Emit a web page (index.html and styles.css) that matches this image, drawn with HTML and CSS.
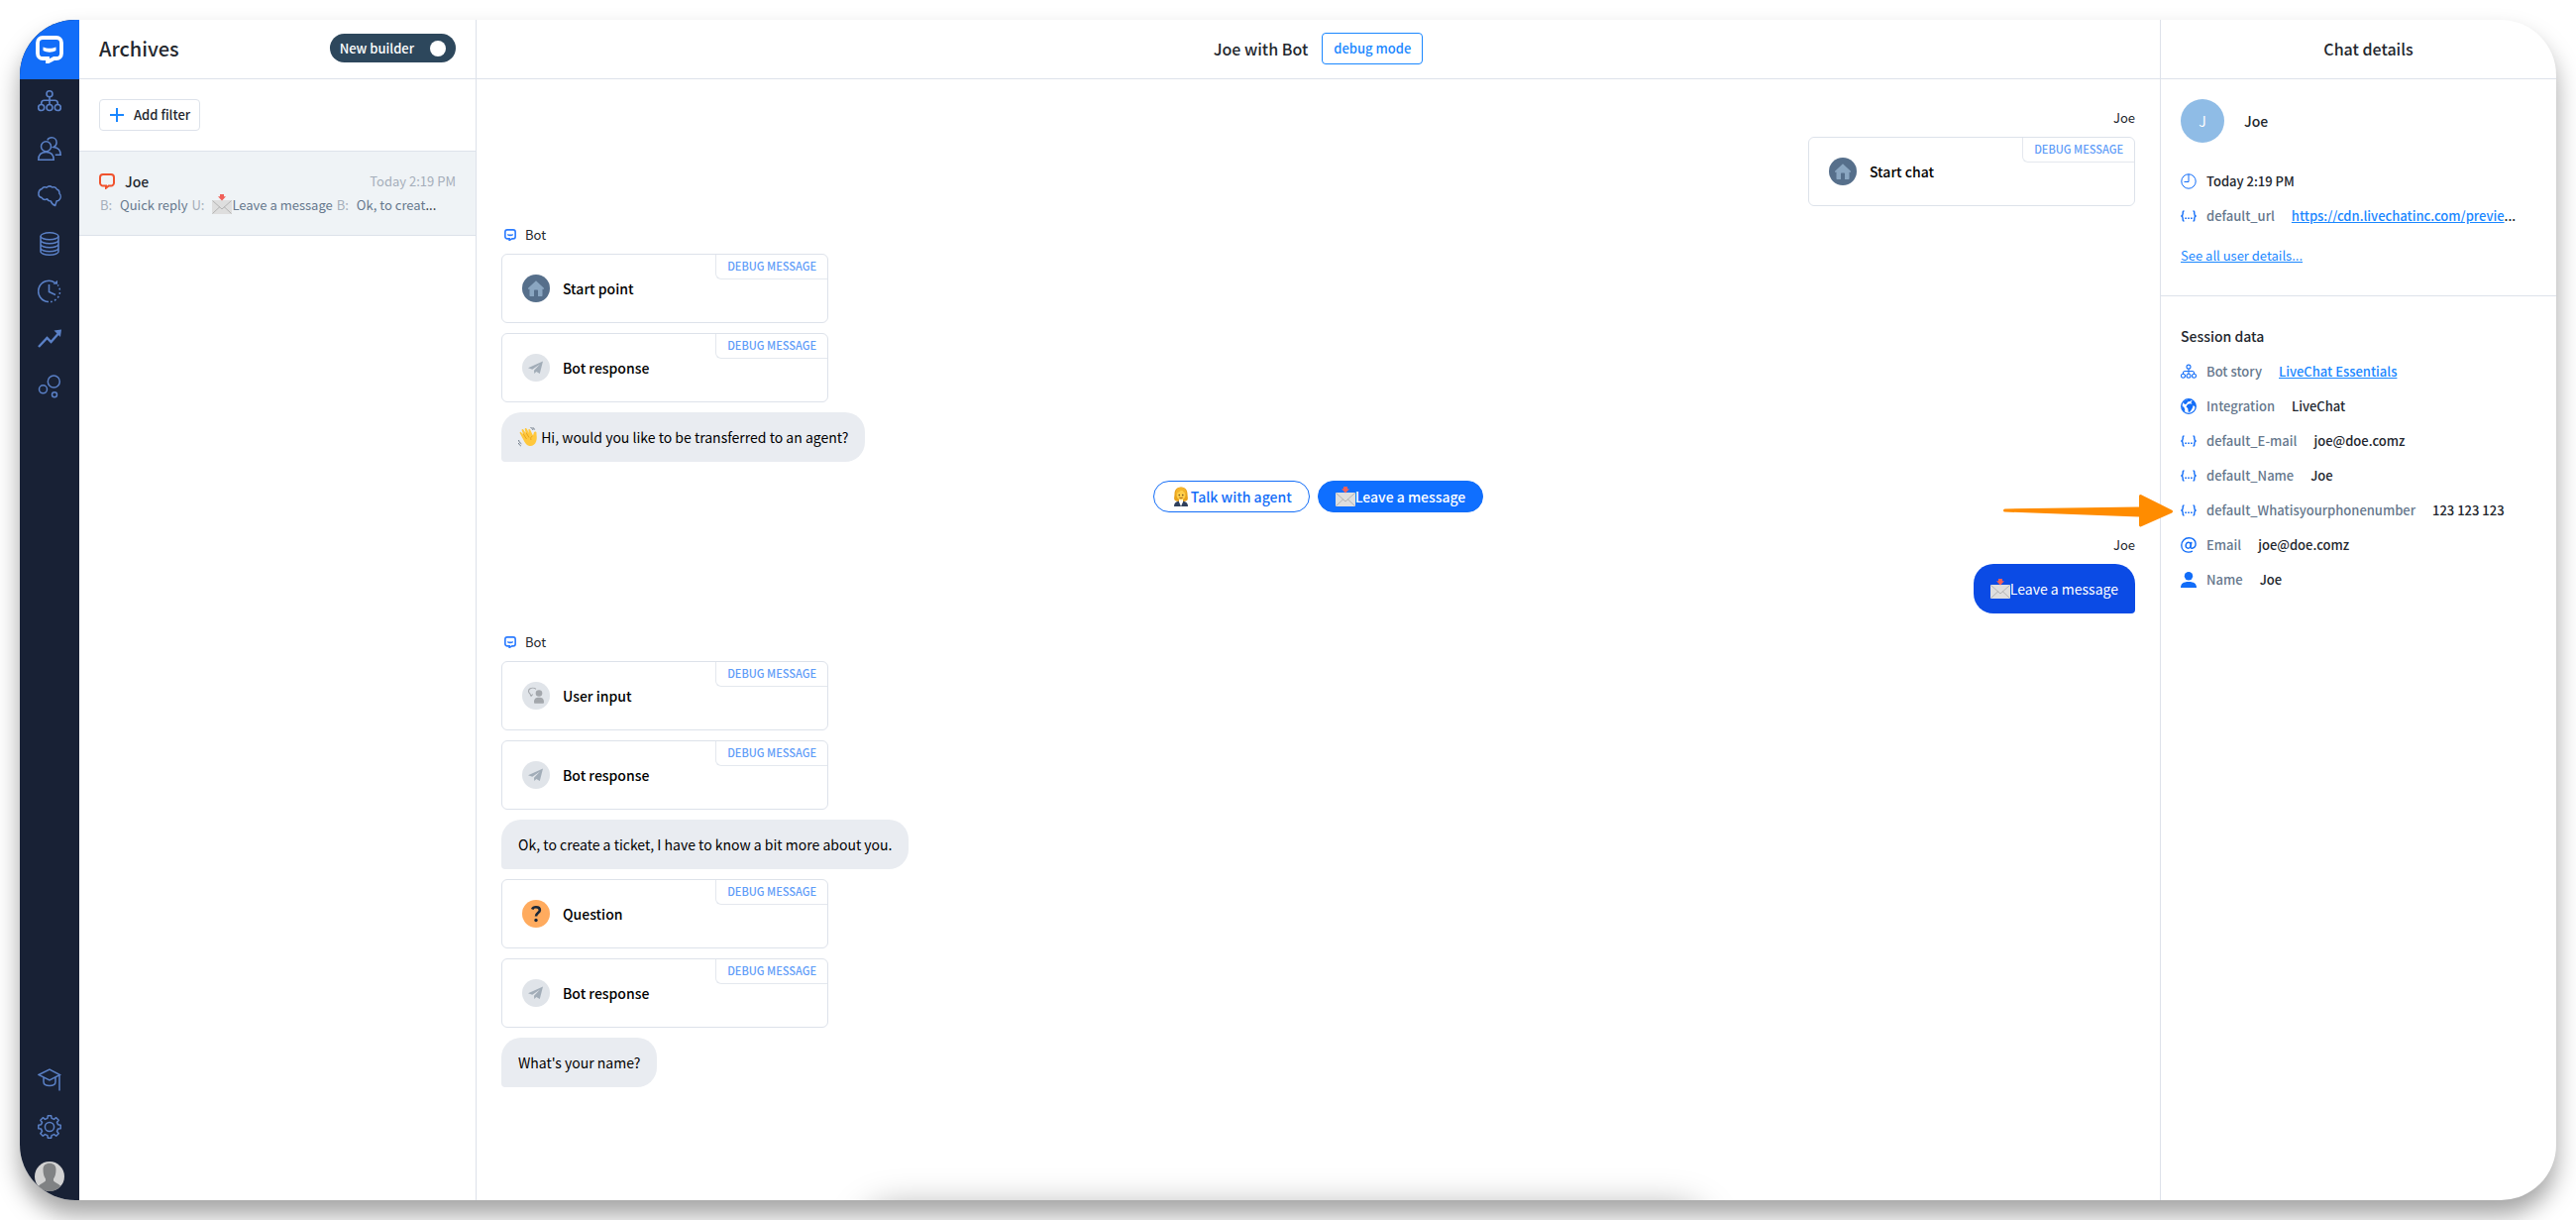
FILE: index.html
```html
<!DOCTYPE html>
<html lang="en">
<head>
    <meta charset="UTF-8">
    <meta name="viewport" content="width=device-width, initial-scale=1.0">
    <title>Archives</title>
    <link rel="stylesheet" href="styles.css">
</head>
<body>

    <!-- shared icons -->
    <svg class="sprite" aria-hidden="true">
        <symbol id="i-tree" viewBox="0 0 24 24">
            <g fill="none" stroke="currentColor" stroke-width="1.6">
                <circle cx="12" cy="4.7" r="3"/><circle cx="3.7" cy="18.5" r="3"/><circle cx="12" cy="18.5" r="3"/><circle cx="20.3" cy="18.5" r="3"/>
                <path d="M12 7.7v7.8M3.7 15.5v-1.2a3 3 0 0 1 3-3h10.600a3 3 0 0 1 3 3v1.200"/>
            </g>
        </symbol>
        <symbol id="i-vars" viewBox="0 0 16 16">
            <path d="M3.500 3C2 3 2.200 4 2.200 5.500S1.800 7.700 .5 8c1.300 .3 1.700 1 1.700 2.500S2 13 3.500 13M12.500 3c1.500 0 1.300 1 1.300 2.500s.4 2.200 1.700 2.500c-1.300 .3-1.700 1-1.700 2.500s.2 2.500-1.300 2.500" fill="none" stroke="currentColor" stroke-width="1.400"/>
            <path d="M4.300 9.500h1.600v1.600H4.300zM7.200 9.500h1.600v1.600H7.200zM10.100 9.500h1.600v1.600h-1.600z" fill="currentColor"/>
        </symbol>
        <symbol id="i-bot" viewBox="0 0 28 28">
            <path d="M7 2h14a5 5 0 0 1 5 5v11a5 5 0 0 1-5 5h-2.500L12 26.500V23H7a5 5 0 0 1-5-5V7a5 5 0 0 1 5-5z" fill="none" stroke="currentColor" stroke-width="3.800"/>
            <path d="M7.500 11.500c4 1.800 9 1.800 13 0v3.500c-4 2.200-9 2.200-13 0z" fill="currentColor"/>
        </symbol>
        <symbol id="i-home" viewBox="0 0 28 28">
            <circle cx="14" cy="14" r="14" fill="#566f8b"/>
            <path d="M14 6.300 6 13.700v1h1.500v6.300c0 .6.300 1 1 1H12v-5.500c0-.6.300-1 1-1h2c.7 0 1 .4 1 1V22h3.500c.7 0 1-.4 1-1v-6.300H22v-1z" fill="#8aa6c1"/>
        </symbol>
        <symbol id="i-plane" viewBox="0 0 28 28">
            <circle cx="14" cy="14" r="14" fill="#e0e4e9"/>
            <path d="M21 7.500 6 14.200l4.300 1.600L18 10.500l-6 6.200v.6L12.300 20l2-2 3.500 2z" fill="#a2adb8"/>
        </symbol>
        <symbol id="i-mail" viewBox="0 0 20 20">
            <rect y="6" width="20" height="14" rx="1" fill="#dedede"/>
            <path d="M.5 19.500 8 12.500M19.500 19.500 12 12.500M.5 6.500 10 15l9.500-8.500" fill="none" stroke="#b3b3b3"/>
            <path d="M8 0h4v2.300h2L10 6.500 6 2.300h2z" fill="#f0605a"/>
        </symbol>
        <symbol id="i-wave" viewBox="0 0 20 20">
            <path d="M5.200 12.500 1.800 6.300c-.7-1.300.9-2 1.600-.9L5.500 8 3.700 3.600c-.6-1.500 1-2.200 1.800-.9L8 6.800 6.800 2.500c-.4-1.600 1.300-2 1.900-.7L11 6l-.6-2.700c-.3-1.400 1.200-1.800 1.700-.7l2.900 5.900.9-3c.5-1.600 2.700-1.200 2.600.4-.2 2.200 1 4.700-.4 8.500-1.200 3.400-4.100 5.100-7.500 4.300-2.300-.6-3.900-2.900-5.400-6.200z" fill="#ffc83d"/>
            <path d="M5 6.500 8.500 12M8 5.500l3 5M14.500 9c-1.500.5-2.300 2-1.500 4" fill="none" stroke="#e09a17" stroke-width=".8"/>
            <path d="M12.500.5c1.300.3 2.200 1.200 2.500 2.500M.5 13c.3 1.600 1.300 3 2.800 3.800M.3 16c.5 1.300 1.300 2.300 2.500 3M14.500.3c1 .4 1.800 1.200 2.100 2.200" fill="none" stroke="#6b7785" stroke-width="1"/>
        </symbol>
        <symbol id="i-agent" viewBox="0 0 16 20">
            <path d="M8 .5c-4.500 0-6.500 3-6.500 7C1.500 10 .6 12 1.500 13.500 3 15.500 13 15.500 14.500 13.500c.9-1.500 0-3.500 0-6 0-4-2-7-6.500-7z" fill="#e8a21a"/>
            <path d="M1 20c0-3.500 2-5 4.500-5.300h5C13 15 15 16.500 15 20z" fill="#2f3f5c"/>
            <path d="M6 12h4v3.500L8 20l-2-4.500z" fill="#fff"/>
            <ellipse cx="8" cy="8.500" rx="4.500" ry="5" fill="#ffcf4a"/>
            <path d="M2.500 8C4 6 7 5.500 8.500 3c1.500 2 3 3 5 4.500C13 2.500 11 .8 8 .8S2.800 3 2.500 8z" fill="#f4b52b"/>
            <circle cx="6.200" cy="8.500" r=".7" fill="#4a341a"/><circle cx="9.800" cy="8.500" r=".7" fill="#4a341a"/>
            <path d="M6.300 11q1.700 1.200 3.400 0" fill="none" stroke="#8b4a1a" stroke-width=".8"/>
        </symbol>
    </svg>

    <div class="app">

        <nav class="sidebar">
            <a class="logo" href="#" aria-label="Home"><svg width="28" height="28"><use href="#i-bot"/></svg></a>
            <a href="#" aria-label="Stories"><svg width="24" height="24"><use href="#i-tree"/></svg></a>
            <a href="#" aria-label="Users">
                <svg width="24" height="24" viewBox="0 0 24 24" fill="none" stroke="currentColor" stroke-width="1.500">
                    <circle cx="8.500" cy="9.700" r="5"/>
                    <path d="M.8 23.200c0-5.200 3-7.700 7.700-7.700s7.700 2.500 7.700 7.700z"/>
                    <path d="M9.800 3.300C10.700 1.700 12.200.8 14.200.8c2.900 0 4.900 2.200 4.900 5 0 2.100-1.100 3.900-3 4.700 4.600.5 7.100 3.100 7.100 7.700h-5.500"/>
                </svg>
            </a>
            <a href="#" aria-label="Training">
                <svg width="24" height="24" viewBox="0 0 24 24" fill="none" stroke="currentColor" stroke-width="1.500" stroke-linejoin="round">
                    <path d="M9 3.200C10.500 1.800 13 1.600 14.700 3c2-.6 4 .3 4.700 2 1.900.6 2.700 2.300 2.500 4.200 1.700 1.600 1.700 4.300.3 6-.7 1.200-1.900 1.700-3 1.500l-1.500 4.800c-2.300-.8-3.700-2.100-4.300-4.500-2.300 0-3.300-.8-3.700-2.200-2.200 1-4.500.5-5.500-1.200C1.800 13 .6 11.200 1 9c0-2.300 1.200-3.900 3-4.300 1.300-1.800 3.300-2.300 5-1.500z"/>
                </svg>
            </a>
            <a href="#" aria-label="Data">
                <svg width="24" height="24" viewBox="0 0 24 24" fill="none" stroke="currentColor" stroke-width="1.500">
                    <ellipse cx="12" cy="4.300" rx="9" ry="3.500"/>
                    <path d="M3 4.300v15.400c0 2 4 3.500 9 3.500s9-1.500 9-3.500V4.300M3 8.200c0 2 4 3.500 9 3.500s9-1.500 9-3.500M3 12.200c0 2 4 3.500 9 3.500s9-1.500 9-3.500M3 16.200c0 2 4 3.500 9 3.500s9-1.500 9-3.500"/>
                </svg>
            </a>
            <a href="#" aria-label="Archives">
                <svg width="24" height="24" viewBox="0 0 24 24" fill="none" stroke="currentColor" stroke-width="1.600">
                    <path d="M11 22.500A10.600 10.600 0 1 1 17.500 3.300"/>
                    <path d="M15.500 4.800h4.500V.8z" fill="currentColor" stroke="none"/>
                    <path d="M13 22.500A10.600 10.600 0 0 0 20.300 5.500" stroke-dasharray="1.800 2.400"/>
                    <path d="M11.500 5v7.500l6.500 3"/>
                </svg>
            </a>
            <a href="#" aria-label="Analytics">
                <svg width="24" height="24" viewBox="0 0 24 24">
                    <path d="m1 20 8.500-9 4 4L21 6.500" fill="none" stroke="currentColor" stroke-width="2.400"/>
                    <path d="m16.500 3.500 7.500-1-1 7.500z" fill="currentColor"/>
                </svg>
            </a>
            <a href="#" aria-label="Integrations">
                <svg width="24" height="24" viewBox="0 0 24 24" fill="none" stroke="currentColor" stroke-width="1.500">
                    <circle cx="16.300" cy="7" r="6"/><circle cx="5.500" cy="14.800" r="4"/><circle cx="17" cy="20.300" r="2.500"/>
                </svg>
            </a>
            <div class="spacer"></div>
            <a href="#" aria-label="Academy">
                <svg width="24" height="24" viewBox="0 0 24 24" fill="none" stroke="currentColor" stroke-width="1.500">
                    <path d="M1 7.500 12 2l10.500 5.500L12 13zM6 10.300v4.200c0 2.300 2 4 6 4s6-1.700 6-4v-4.200M22 7.500v16"/>
                </svg>
            </a>
            <a href="#" aria-label="Settings">
                <svg width="24" height="24" viewBox="0 0 24 24" fill="none" stroke="currentColor" stroke-width="1.500" stroke-linejoin="round">
                    <circle cx="12" cy="12" r="4.600"/>
                    <path d="M10.300.8h3.400l.4 2.600 2.400 1 2.200-1.700 2.500 2.500-1.700 2.300 1 2.300 2.700.4v3.500l-2.700.4-1 2.400 1.700 2.200-2.500 2.500-2.200-1.600-2.400 1-.4 2.600h-3.400l-.4-2.600-2.400-1-2.200 1.600-2.500-2.500 1.700-2.200-1-2.400-2.700-.4v-3.500l2.700-.4 1-2.300-1.700-2.300 2.500-2.500 2.200 1.700 2.400-1z"/>
                </svg>
            </a>
            <a class="me" href="#" aria-label="My profile">
                <svg width="30" height="30" viewBox="0 0 30 30">
                    <circle cx="15" cy="15" r="15" fill="#d2d2d2"/>
                    <path d="M8.500 8c0-4 2.500-6.200 6.500-6.200S21.500 4 21.500 8c0 4.500-1 7.500-2.500 9.500v2c1.500 2 5.500 2.800 7.300 5.500A15 15 0 0 1 3.700 25c1.800-2.700 5.800-3.500 7.300-5.500v-2C9.500 15.500 8.500 12.500 8.500 8z" fill="#808284"/>
                </svg>
            </a>
        </nav>

        <section class="archives">
            <header class="bar">
                <h1>Archives</h1>
                <button class="builder">New builder <span class="knob"></span></button>
            </header>
            <div class="filters">
                <button class="add-filter">
                    <svg width="16" height="16" viewBox="0 0 16 16"><path d="M8 1v14M1 8h14" stroke="#1a87ff" stroke-width="2"/></svg>
                    Add filter
                </button>
            </div>
            <a class="chat-item" href="#">
                <div class="chat-top">
                    <svg width="16" height="16" viewBox="0 0 16 16"><path d="M4 1h8a3 3 0 0 1 3 3v5.500a3 3 0 0 1-3 3H9.700L7 14.700v-2.200H4a3 3 0 0 1-3-3V4a3 3 0 0 1 3-3z" fill="none" stroke="#f0522d" stroke-width="2"/></svg>
                    <strong>Joe</strong>
                    <time>Today 2:19 PM</time>
                </div>
                <p class="preview"><i>B:</i> <span>Quick reply</span> <i>U:</i> <span><svg class="emoji" width="20" height="20"><use href="#i-mail"/></svg>Leave a message</span> <i>B:</i> <span>Ok, to creat</span>...</p>
            </a>
        </section>

        <main class="chat">
            <header class="bar">
                <h2>Joe with Bot</h2>
                <button class="debug-mode">debug mode</button>
            </header>

            <div class="messages">
                <div class="group user">
                    <div class="author">Joe</div>
                    <div class="card">
                        <svg width="28" height="28"><use href="#i-home"/></svg>
                        <b>Start chat</b><span class="tag">DEBUG MESSAGE</span>
                    </div>
                </div>

                <div class="group">
                    <div class="author"><svg width="12" height="12"><use href="#i-bot"/></svg>Bot</div>
                    <div class="card">
                        <svg width="28" height="28"><use href="#i-home"/></svg>
                        <b>Start point</b><span class="tag">DEBUG MESSAGE</span>
                    </div>
                    <div class="card">
                        <svg width="28" height="28"><use href="#i-plane"/></svg>
                        <b>Bot response</b><span class="tag">DEBUG MESSAGE</span>
                    </div>
                    <div class="bubble"><svg class="emoji" width="20" height="20"><use href="#i-wave"/></svg> Hi, would you like to be transferred to an agent?</div>
                </div>

                <div class="replies">
                    <button><svg class="emoji" width="20" height="20"><use href="#i-agent"/></svg>Talk with agent</button>
                    <button class="picked"><svg class="emoji" width="20" height="20"><use href="#i-mail"/></svg>Leave a message</button>
                </div>

                <div class="group user">
                    <div class="author">Joe</div>
                    <div class="bubble"><svg class="emoji" width="20" height="20"><use href="#i-mail"/></svg>Leave a message</div>
                </div>

                <div class="group">
                    <div class="author"><svg width="12" height="12"><use href="#i-bot"/></svg>Bot</div>
                    <div class="card">
                        <svg width="28" height="28" viewBox="0 0 28 28">
                            <circle cx="14" cy="14" r="14" fill="#e0e4e9"/>
                            <path d="M14 7.300C12.500 6 9.500 6 7.800 7c-1.900 1.400-1.600 3.700 0 4.800l1.300 2.500 1.600-1.800" fill="none" stroke="#a3a7ac" stroke-width="1.100"/>
                            <circle cx="17" cy="11.500" r="3.300" fill="#a3a7ac"/>
                            <path d="M12 20.500c0-3.500 1.700-4.700 5-4.700s5 1.200 5 4.700c0 .9-.4 1.300-1.200 1.300h-7.600c-.8 0-1.200-.4-1.200-1.300z" fill="#a3a7ac"/>
                        </svg>
                        <b>User input</b><span class="tag">DEBUG MESSAGE</span>
                    </div>
                    <div class="card">
                        <svg width="28" height="28"><use href="#i-plane"/></svg>
                        <b>Bot response</b><span class="tag">DEBUG MESSAGE</span>
                    </div>
                    <div class="bubble">Ok, to create a ticket, I have to know a bit more about you.</div>
                    <div class="card">
                        <svg width="28" height="28" viewBox="0 0 28 28">
                            <circle cx="14" cy="14" r="14" fill="#ffab5e"/>
                            <path d="M10.200 9.500c.5-1.400 1.900-2.200 3.800-2.200 2.400 0 3.900 1.200 3.900 3 0 2.800-3.900 2.700-3.900 6.200" fill="none" stroke="#1b2839" stroke-width="2.600"/>
                            <circle cx="14" cy="20.500" r="1.700" fill="#1b2839"/>
                        </svg>
                        <b>Question</b><span class="tag">DEBUG MESSAGE</span>
                    </div>
                    <div class="card">
                        <svg width="28" height="28"><use href="#i-plane"/></svg>
                        <b>Bot response</b><span class="tag">DEBUG MESSAGE</span>
                    </div>
                    <div class="bubble">What's your name?</div>
                </div>
            </div>
            <div class="composer-shadow"></div>
        </main>

        <aside class="details">
            <header class="bar"><h2>Chat details</h2></header>
            <div class="user-info">
                <div class="person"><span class="avatar">J</span><b>Joe</b></div>
                <div class="row">
                    <svg width="16" height="16" viewBox="0 0 16 16" fill="none" stroke="currentColor"><circle cx="8" cy="8" r="7.200"/><path d="M8 .8V8.500H3.500"/></svg>
                    <b>Today 2:19 PM</b>
                </div>
                <div class="row">
                    <svg width="16" height="16"><use href="#i-vars"/></svg>
                    <span>default_url</span><b><a href="#">https://cdn.livechatinc.com/previe</a>...</b>
                </div>
                <a class="see-all" href="#">See all user details...</a>
            </div>
            <div class="session">
                <h3>Session data</h3>
                <div class="row">
                    <svg width="16" height="16"><use href="#i-tree"/></svg>
                    <span>Bot story</span><b><a href="#">LiveChat Essentials</a></b>
                </div>
                <div class="row">
                    <svg width="16" height="16" viewBox="0 0 16 16">
                        <circle cx="8" cy="8" r="7.300" fill="#fff" stroke="currentColor" stroke-width="1.300"/>
                        <path d="M4 2.500 8 .7l3.500.6-2 1.700-2.500.5L6 5.500 4 6 2.500 4zM7 6l2.500-.8 2 .6-1.200-2L12.500 2l2.500 4 .2 3-2.500-2-1 3-2.200 3.500-1.700.5-.6-4L5.500 8.500zM1 7l2.500 2.300.8 2.200-.3 2L1.500 11z" fill="currentColor"/>
                    </svg>
                    <span>Integration</span><b>LiveChat</b>
                </div>
                <div class="row">
                    <svg width="16" height="16"><use href="#i-vars"/></svg>
                    <span>default_E-mail</span><b>joe@doe.comz</b>
                </div>
                <div class="row">
                    <svg width="16" height="16"><use href="#i-vars"/></svg>
                    <span>default_Name</span><b>Joe</b>
                </div>
                <div class="row">
                    <svg class="arrow" width="174" height="36" viewBox="0 0 174 36">
                        <path d="M3.500 16.500 139 14.500V3.500a1.500 1.500 0 0 1 2.200-1.300l31 15.500a1.500 1.500 0 0 1 0 2.700l-31 13.800a1.500 1.500 0 0 1-2.200-1.300V24.500L3.500 19.500a1.500 1.500 0 0 1 0-3z" fill="#ff8c00"/>
                    </svg>
                    <svg width="16" height="16"><use href="#i-vars"/></svg>
                    <span>default_Whatisyourphonenumber</span><b>123 123 123</b>
                </div>
                <div class="row">
                    <svg width="16" height="16" viewBox="0 0 16 16" fill="none" stroke="currentColor" stroke-width="1.400">
                        <ellipse cx="7.700" cy="8.200" rx="2.500" ry="3" transform="rotate(15 7.700 8.200)"/>
                        <path d="M10.900 4.800 10 9.500c-.3 1.500.7 1.900 1.700 1.700 2-.4 3.400-2 3.400-4.400C15.100 3 12.200.8 8.300.8 4 .8.8 4 .8 8.300c0 4.100 2.900 6.800 6.900 6.800 1.600 0 3-.3 4.200-1"/>
                    </svg>
                    <span>Email</span><b>joe@doe.comz</b>
                </div>
                <div class="row">
                    <svg width="16" height="16" viewBox="0 0 16 16" fill="currentColor"><circle cx="8" cy="4.300" r="4.200"/><path d="M0 16c0-4 2.500-6 8-6s8 2 8 6z"/></svg>
                    <span>Name</span><b>Joe</b>
                </div>
            </div>
        </aside>
    </div>

</body>
</html>
```

FILE: styles.css
```css
* { box-sizing: border-box; margin: 0; padding: 0; }
body {
    font-family: "Noto Sans CJK SC", "Open Sans", sans-serif;
    font-size: 14px; line-height: 20px; color: #23272e;
    background: #fff; min-height: 100vh; padding: 20px; display: flex; overflow: hidden;
}
button { font: inherit; font-weight: 500; cursor: pointer; }
b, strong, h1, h2, h3 { font-weight: 500; }
svg { flex: none; }
.sprite { position: absolute; width: 0; height: 0; }
.emoji { vertical-align: -4px; }

.app {
    flex: 1; display: flex; min-width: 0;
    border-radius: 56px; overflow: hidden; background: #fff;
    box-shadow: 0 15px 24px rgba(0, 0, 0, 0.36);
}
.bar {
    height: 60px; flex: none; padding: 0 20px 2px;
    display: flex; align-items: center; justify-content: center;
    border-bottom: 1px solid #dde2ea;
}
h2 { font-size: 16px; line-height: 24px; }

/* sidebar */
.sidebar {
    width: 60px; flex: none; background: #182135; color: #5a80c6;
    display: flex; flex-direction: column;
}
.sidebar a {
    height: 48px; color: inherit;
    display: flex; align-items: center; justify-content: center;
}
.sidebar .logo { height: 60px; margin-bottom: -2px; color: #fff; background: #126df8; }
.sidebar .me { height: 52px; margin-bottom: -2px; }
.spacer { flex: 1; }

/* archives list */
.archives { width: 401px; flex: none; border-right: 1px solid #dde2ea; }
.archives .bar { justify-content: space-between; }
h1 { font-size: 20px; line-height: 28px; }
.builder {
    display: flex; align-items: center; gap: 16px;
    height: 29px; padding: 0 10px; border: none; border-radius: 15px;
    background: #2d475c; color: #fff; font-size: 13px;
}
.knob { width: 16px; height: 16px; border-radius: 50%; background: #fff; }
.filters { padding: 20px; border-bottom: 1px solid #dde2ea; }
.add-filter {
    display: flex; align-items: center; gap: 9px;
    height: 32px; padding: 0 9px 1px; background: #fff; color: inherit;
    border: 1px solid #dde2ea; border-radius: 4px; font-size: 13px;
}
.chat-item {
    display: block; padding: 18px 20px; height: 85px; color: inherit; text-decoration: none;
    background: #eff3f6; border-bottom: 1px solid #dde2ea;
}
.chat-top { display: flex; align-items: center; gap: 10px; height: 24px; }
.chat-top time { margin-left: auto; font-size: 13px; color: #a5aeba; }
.preview { height: 24px; font-size: 13px; line-height: 24px; white-space: nowrap; }
.preview i { font-style: normal; color: #a5aeba; margin: 0 5px 0 1px; }
.preview span { color: #66788d; }

/* conversation */
.chat { flex: 1; min-width: 0; display: flex; flex-direction: column; position: relative; overflow: hidden; }
.chat .bar { gap: 14px; }
.debug-mode {
    height: 32px; padding: 0 11px; background: #fff; color: #1a87ff;
    border: 1px solid #1a87ff; border-radius: 4px; font-size: 13px;
}
.messages { display: flex; flex-direction: column; padding: 10px 25px; color: #000; }
.group { display: flex; flex-direction: column; align-items: flex-start; gap: 10px; margin-top: 20px; }
.group.user { align-items: flex-end; }
.author { display: flex; align-items: center; gap: 9px; height: 18px; font-size: 13px; color: #23272e; }
.author svg { color: #2b7bff; margin-left: 3px; }
.card {
    position: relative; width: 330px; height: 70px; padding: 0 20px;
    display: flex; align-items: center; gap: 13px;
    border: 1px solid #dde2ea; border-radius: 6px;
}
.tag {
    position: absolute; top: 0; right: 0; height: 25px; padding: 0 11px;
    font-size: 11px; font-weight: 500; line-height: 23px; color: #5e9cf8;
    border: solid #e4e8ee; border-width: 0 0 1px 1px; border-bottom-left-radius: 6px;
}
.bubble { height: 50px; line-height: 50px; padding: 0 17px; background: #e9ecf1; border-radius: 20px 20px 20px 4px; }
.user .bubble { background: #0b4be5; color: #fff; border-radius: 20px 20px 4px 20px; }
.replies { display: flex; justify-content: center; gap: 8px; margin: 19px 0 4px; }
.replies button {
    height: 32px; padding: 0 17px; background: #fff; color: #126df8;
    border: 1px solid #126df8; border-radius: 16px;
}
.replies .picked { background: #0f6fff; color: #fff; }
.composer-shadow {
    position: absolute; left: 23%; right: 27%; bottom: -68px; height: 60px;
    border-radius: 30px; box-shadow: 0 0 36px rgba(0, 0, 0, 0.35);
}

/* details */
.details { width: 400px; flex: none; border-left: 1px solid #dde2ea; }
.details .bar { padding-left: 40px; }
.user-info { height: 219px; padding: 20px; border-bottom: 1px solid #dde2ea; }
.person { display: flex; align-items: center; gap: 20px; margin-bottom: 22px; }
.avatar {
    width: 44px; height: 44px; border-radius: 50%; background: #8fbce6; color: #fff;
    line-height: 44px; text-align: center;
}
.row { position: relative; height: 35px; padding-bottom: 2px; display: flex; align-items: center; font-size: 13px; color: #126df8; }
.row span { color: #66788d; font-weight: 500; margin: 0 17px 0 10px; }
.row b { color: #23272e; white-space: nowrap; }
.row svg + b { margin-left: 10px; }
.details a { color: #1a87ff; }
.see-all { display: block; margin-top: 12px; font-size: 13px; }
.session { padding: 30px 20px; }
.session h3 { font-size: 14px; line-height: 20px; margin-bottom: 9px; }
.arrow { position: absolute; right: 100%; margin-right: 7px; }
```
